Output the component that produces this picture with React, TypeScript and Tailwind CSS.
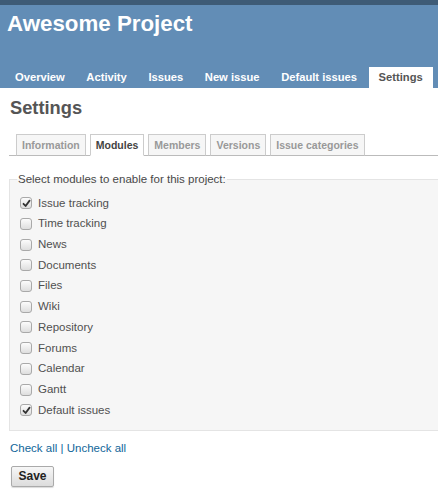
import React from 'react';

const menu = ['Overview', 'Activity', 'Issues', 'New issue', 'Default issues', 'Settings'];
const subTabs = ['Information', 'Modules', 'Members', 'Versions', 'Issue categories'];
const modules: [string, boolean][] = [
  ['Issue tracking', true],
  ['Time tracking', false],
  ['News', false],
  ['Documents', false],
  ['Files', false],
  ['Wiki', false],
  ['Repository', false],
  ['Forums', false],
  ['Calendar', false],
  ['Gantt', false],
  ['Default issues', true],
];

const Box: React.FC<{ checked: boolean }> = ({ checked }) => (
  <span className="w-[12px] h-[12px] rounded-[3px] border border-[#a9a9a9] bg-gradient-to-b from-[#fcfcfc] to-[#dedede] flex items-center justify-center shrink-0">
    {checked && (
      <svg width="9" height="9" viewBox="0 0 9 9">
        <path d="M1.5 4.8 L3.6 7 L7.6 1.6" fill="none" stroke="#333" strokeWidth="1.8" strokeLinecap="round" strokeLinejoin="round" />
      </svg>
    )}
  </span>
);

export default function App() {
  return (
    <div className="w-full min-h-[500px] bg-white overflow-hidden text-[11.5px] text-[#484848]" style={{ fontFamily: '"Liberation Sans", Arial, sans-serif' }}>
      <div className="h-[5px] bg-[#3e5b76]" />
      <div className="h-[83px] bg-[#628db6] flex flex-col">
        <h1 className="text-[22.3px] leading-[26px] font-bold text-white pl-[7px] pt-[6px]">Awesome Project</h1>
        <ul className="mt-auto flex pl-[5px]">
          {menu.map((m) => (
            <li
              key={m}
              className={`px-[10px] py-[4px] mr-[1.6px] text-[11.2px] leading-[13px] font-bold ${m === 'Settings' ? 'bg-white text-[#555]' : 'text-white'}`}
            >
              {m}
            </li>
          ))}
        </ul>
      </div>
      <div className="pl-[9px]">
        <h2 className="mt-[9px] pl-px text-[18.3px] leading-[22px] font-bold text-[#555]">Settings</h2>
        <ul className="mt-[15px] flex border-b border-[#bbb] pl-[3px]">
          {subTabs.map((t) => (
            <li
              key={t}
              className={`ml-[4px] -mb-px px-[5px] pt-[4px] pb-[3px] text-[10.5px] leading-[13px] font-bold border ${t === 'Modules' ? 'bg-white text-[#444] border-[#ccc] border-b-white' : 'bg-[#f6f6f6] text-[#999] border-[#ccc] border-b-[#bbb]'}`}
            >
              {t}
            </li>
          ))}
        </ul>
        <fieldset className="mt-[16px] -mr-[20px] border border-[#e4e4e4] bg-[#f6f6f6] pl-[10px] pb-[9px] pt-[7px]">
          <legend className="px-[1px] -ml-[3px] leading-[14px] text-[#484848]">Select modules to enable for this project:</legend>
          {modules.map(([name, checked]) => (
            <label key={name} className="flex items-center gap-[6px] h-[20.7px] text-[#505050]">
              <Box checked={checked} />
              <span>{name}</span>
            </label>
          ))}
        </fieldset>
        <p className="mt-[10px] pl-px leading-[15px] text-[#169]">
          <a href="#">Check all</a> | <a href="#">Uncheck all</a>
        </p>
        <button className="mt-[10px] ml-[2px] w-[43px] h-[21px] border border-[#aaa] rounded-[2px] bg-gradient-to-b from-[#f7f7f7] to-[#dcdcdc] text-[12px] font-bold text-[#222] shadow-[0_1px_1px_rgba(0,0,0,0.15)]">
          Save
        </button>
      </div>
    </div>
  );
}
